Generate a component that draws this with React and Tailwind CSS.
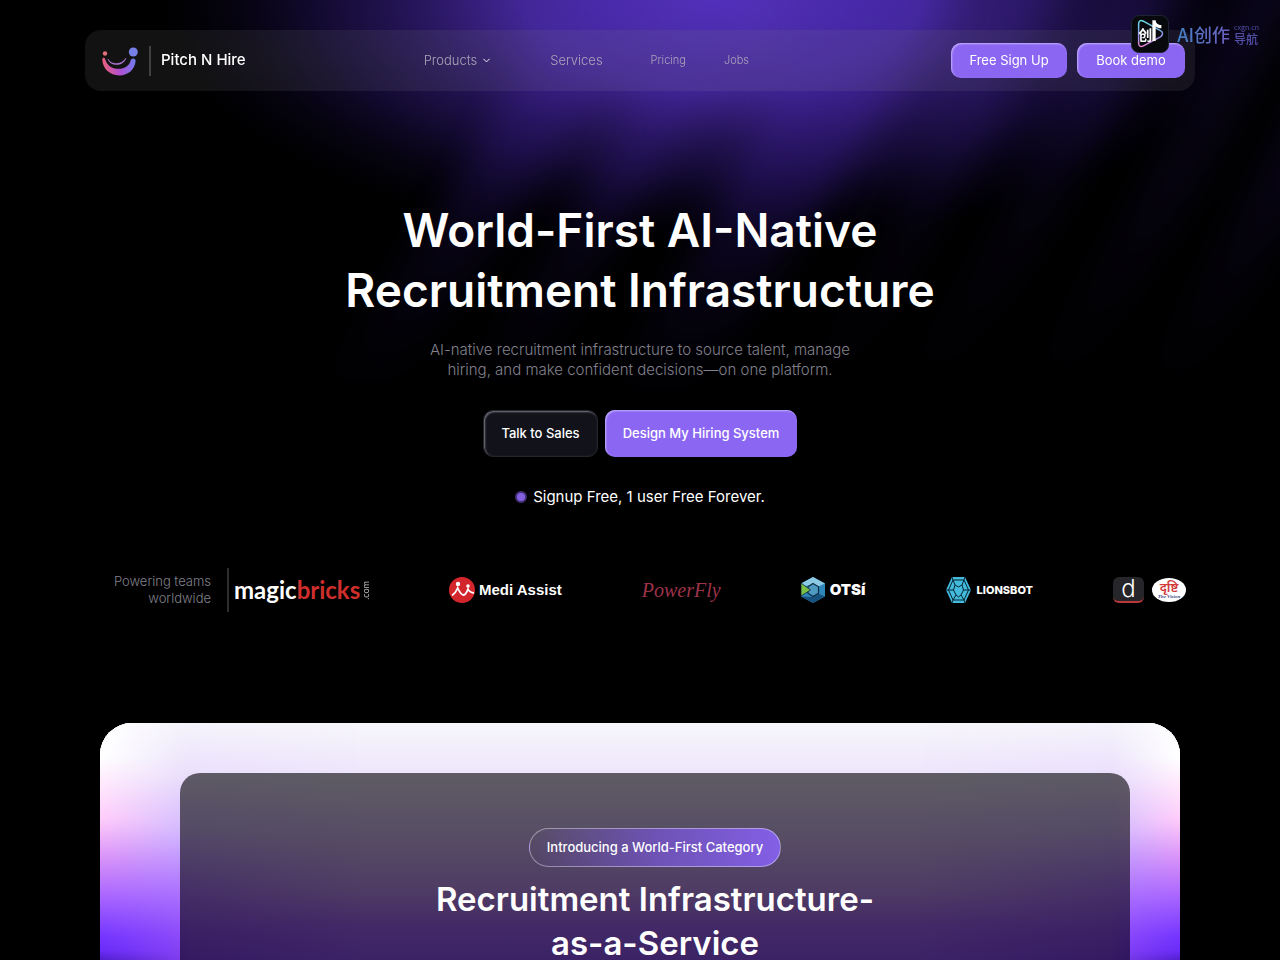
import { ChevronDown } from "lucide-react";

const HeroGlow = () => (
  <svg
    aria-hidden="true"
    className="absolute inset-x-0 top-0 h-[440px] w-full"
    viewBox="0 0 1280 440"
    preserveAspectRatio="none"
  >
    <defs>
      <radialGradient id="glow-main" cx="0.5" cy="0.5" r="0.5">
        <stop offset="0" stopColor="#5a35c8" stopOpacity="0.95" />
        <stop offset="0.35" stopColor="#4e2db0" stopOpacity="0.85" />
        <stop offset="0.7" stopColor="#2c1870" stopOpacity="0.45" />
        <stop offset="1" stopColor="#0a0420" stopOpacity="0" />
      </radialGradient>
      <linearGradient id="ray" gradientUnits="userSpaceOnUse" x1="0" y1="0" x2="0" y2="400">
        <stop offset="0" stopColor="#4a2ab4" stopOpacity="0.4" />
        <stop offset="0.5" stopColor="#3a1c98" stopOpacity="0.28" />
        <stop offset="1" stopColor="#1c0c58" stopOpacity="0" />
      </linearGradient>
      <filter
        id="soft"
        filterUnits="userSpaceOnUse"
        x="-100"
        y="-150"
        width="1600"
        height="700"
        colorInterpolationFilters="sRGB"
      >
        <feGaussianBlur stdDeviation="16" />
      </filter>
    </defs>
    <ellipse cx="720" cy="0" rx="570" ry="250" fill="url(#glow-main)" />
    <g fill="url(#ray)" filter="url(#soft)">
      <path d="M590 -60h80Q540 200 380 400h-70Q460 200 590 -60z" opacity="0.7" />
      <path d="M720 -60h60Q650 200 510 400h-60Q600 200 720 -60z" opacity="0.7" />
      <path d="M840 -60h130Q840 200 680 400h-80Q740 200 840 -60z" />
      <path d="M1020 -60h60Q960 200 830 400h-40Q930 200 1020 -60z" opacity="0.4" />
      <path d="M1140 -60h60Q1080 200 930 400h-50Q1040 200 1140 -60z" opacity="0.35" />
      <path d="M1270 -60h60Q1200 200 1060 400h-50Q1150 200 1270 -60z" opacity="0.35" />
      <path d="M1370 -60h60Q1310 200 1180 400h-50Q1260 200 1370 -60z" opacity="0.45" />
    </g>
  </svg>
);

const BrandMark = () => (
  <svg className="h-[31px] w-9" viewBox="0 0 36 31" aria-hidden="true">
    <defs>
      <linearGradient id="brand" x1="0" y1="0.3" x2="1" y2="0.2">
        <stop offset="0" stopColor="#e8607a" />
        <stop offset="0.45" stopColor="#b44fd0" />
        <stop offset="1" stopColor="#6f7cf0" />
      </linearGradient>
    </defs>
    <circle cx="3" cy="8.5" r="2.2" fill="#e0707a" />
    <circle cx="31.3" cy="7" r="4.5" fill="#7680e6" />
    <path
      d="M0.300 14.500C0.300 12.300 2.600 12.300 3.200 14.200C5 20.500 10 23.800 16.500 23.800C23 23.800 27.500 20.500 28.600 15.500C29.200 12.600 33.800 12.800 33.600 16C33 24.500 26 30.400 17.500 30.400C8 30.400 0.700 24 0.300 14.500z"
      fill="url(#brand)"
    />
    <path
      d="M6 14C9 20 19.500 20.500 24 13C21.500 21.800 8 21.500 6 14z"
      fill="#b87be0"
      stroke="#b87be0"
      strokeWidth="0.4"
    />
  </svg>
);

const NavBar = () => (
  <header className="mx-auto flex h-[61px] w-full max-w-[1110px] items-center justify-between rounded-2xl bg-[#8c8c8c]/13 pr-[10px] pl-[17px] backdrop-blur-md">
    <a href="#home" className="flex items-center">
      <BrandMark />
      <span className="ml-[11px] h-[30px] w-[2px] bg-white/20" />
      <span className="ml-[10px] text-[15px] font-medium text-white">Pitch N Hire</span>
    </a>
    <nav className="mr-6 flex items-center text-[13px] font-light text-[#aaa3b8]">
      <a href="#products" className="mr-[58px] flex items-center gap-1">
        Products
        <ChevronDown className="size-[11px] text-white" strokeWidth={2} />
      </a>
      <a href="#services" className="mr-12">
        Services
      </a>
      <a href="#pricing" className="mr-[38px] text-[11px]">
        Pricing
      </a>
      <a href="#jobs" className="text-[11px]">
        Jobs
      </a>
    </nav>
    <div className="flex gap-[10px]">
      <button className="h-[35px] w-[116px] rounded-[10px] bg-[#8b66f2] text-[13px] text-white shadow-[inset_1px_1px_2px_#c4b0ff]">
        Free Sign Up
      </button>
      <button className="h-[35px] w-[108px] rounded-[10px] bg-[#8b66f2] text-[13px] text-white shadow-[inset_1px_1px_2px_#c4b0ff]">
        Book demo
      </button>
    </div>
  </header>
);

const DirectoryBadge = () => (
  <div className="absolute top-[15px] right-[21px] flex items-center gap-2 font-['Noto_Sans_CJK_SC',sans-serif]">
    <span className="relative flex size-[38px] items-center rounded-lg border border-[#1c2630] bg-[#07090d] pl-[6px]">
      <svg className="absolute inset-0 size-full" viewBox="0 0 38 38" fill="none" aria-hidden="true">
        <defs>
          <linearGradient id="badge" x1="0" y1="0" x2="0" y2="1">
            <stop offset="0" stopColor="#63dfe6" />
            <stop offset="0.6" stopColor="#8f8fe0" />
            <stop offset="1" stopColor="#e887d8" />
          </linearGradient>
        </defs>
        <path
          d="M7 8.500C7 5 9 4 12 5.500L30 15.500C33 17 33 20 30 22L12 31.500C9 33 7 32 7 28.500z"
          stroke="url(#badge)"
          strokeWidth="1.600"
        />
        <path d="M21.500 4.500h3.500c0 3 2.500 5 6 5v3.500c-2.500 0-4.500-.8-6-2v15.500h-3.500z" fill="#fff" />
      </svg>
      <span className="relative text-sm leading-none font-bold text-white">创</span>
    </span>
    <span className="bg-linear-to-r from-[#3f7fc4] to-[#6c5fc0] bg-clip-text text-lg leading-6 font-medium text-transparent">
      AI创作
    </span>
    <span className="-ml-1 flex flex-col text-[#5350a8]">
      <span className="text-[7px] leading-[10px]">cxgn.cn</span>
      <span className="text-xs leading-[14px] font-medium">导航</span>
    </span>
  </div>
);

const Hero = () => (
  <section className="mt-[109px] flex flex-col items-center text-center">
    <h1 className="text-[46px] leading-[60px] font-semibold text-white">
      World-First AI-Native
      <br />
      Recruitment Infrastructure
    </h1>
    <p className="mt-5 text-[15px] leading-5 font-light text-[#81808c]">
      AI-native recruitment infrastructure to source talent, manage
      <br />
      hiring, and make confident decisions—on one platform.
    </p>
    <div className="mt-[30px] flex gap-[7px]">
      <button className="h-[47px] w-[115px] rounded-[10px] border border-[#25252c] bg-[#11121a] text-[13px] font-medium text-white shadow-[inset_1px_1px_2px_#7d7d86]">
        Talk to Sales
      </button>
      <button className="h-[47px] w-48 rounded-[10px] bg-[#8b66f2] text-[13px] font-medium text-white shadow-[inset_1px_1px_2px_#c4b0ff]">
        Design My Hiring System
      </button>
    </div>
    <p className="mt-[30px] flex items-center gap-[6px] text-[15px] leading-5 text-white">
      <span className="size-3 rounded-full border-2 border-[#44317a] bg-[#8460df]" />
      Signup Free, 1 user Free Forever.
    </p>
  </section>
);

const MagicBricks = () => (
  <div className="flex w-[135px] items-center justify-between font-['Lato',sans-serif] text-2xl leading-8 font-bold">
    <span className="text-white">
      magic<span className="text-[#cf2f2c]">bricks</span>
    </span>
    <span className="rotate-180 text-[9px] leading-[7px] font-normal text-[#bdbdbd] [writing-mode:vertical-rl]">
      .com
    </span>
  </div>
);

const MediAssist = () => (
  <div className="flex items-center gap-1">
    <svg className="size-[26px]" viewBox="0 0 26 26" aria-hidden="true">
      <circle cx="13" cy="13" r="13" fill="#d2252c" />
      <circle cx="9" cy="7" r="2.200" fill="#fff" />
      <circle cx="19" cy="9" r="1.800" fill="#fff" />
      <path
        d="M3 18.500C6 16.500 7.500 14 8.700 11C10 14 12 17.500 14.500 18C17 17.500 18 14.500 19 12C20 14.500 22 15.500 25 16"
        fill="none"
        stroke="#fff"
        strokeWidth="1.800"
      />
    </svg>
    <span className="font-['Liberation_Sans',sans-serif] text-[15px] font-bold text-white">Medi Assist</span>
  </div>
);

const Otsi = () => (
  <div className="flex items-center gap-[5px]">
    <svg className="h-[26px] w-6" viewBox="0 0 24 26" aria-hidden="true">
      <path d="M12 0L24 6.500V19.500L12 26L0 19.500V6.500z" fill="#2f86b8" />
      <path d="M12 0L24 6.500L17 9.500L12 7L5 9L0 6.500z" fill="#8cc9e2" />
      <path d="M0 19.500L12 26L24 19.500L17 16.500L12 20z" fill="#17527f" />
      <path d="M12 6.500L17.500 9.800V16.200L12 19.500L7 16.200V9.800z" fill="#4f9ac0" stroke="#0b2b44" strokeWidth="1.200" />
      <path d="M0 6L9.500 13L0 19z" fill="#7cc043" stroke="#0b2b44" strokeWidth="0.800" />
    </svg>
    <span className="text-[15px] font-black text-white">OTSí</span>
  </div>
);

const LionsBot = () => (
  <div className="flex items-center gap-[6px]">
    <svg className="h-[26px] w-[25px]" viewBox="0 0 25 26" aria-hidden="true">
      <path d="M6 0H19L25 13L19 26H6L0 13z" fill="#43b9dc" />
      <g fill="none" stroke="#062331" strokeWidth="1">
        <path d="M7 3H18L22.500 13L18 23H7L2.500 13z" />
        <path d="M7 3L9 8L12.500 10L16 8L18 3M9 8L7.500 13L10 18L12.500 20L15 18L17.500 13L16 8M2.500 13H7.500M17.500 13H22.500M10 18L7 23M15 18L18 23" />
        <path d="M6 0L7 3M19 0L18 3M6 26L7 23M19 26L18 23M0 13H2.500M22.500 13H25" />
      </g>
    </svg>
    <span className="text-[11px] font-extrabold text-white">LIONSBOT</span>
  </div>
);

const Drishti = () => (
  <div className="flex items-center gap-2">
    <span className="flex h-[26px] w-[31px] items-center justify-center rounded-md border-b-2 border-[#b8383c] bg-[#26252a] text-2xl leading-6 font-light text-white">
      d
    </span>
    <span className="flex h-6 w-[34px] flex-col items-center justify-center rounded-[50%] bg-white font-['Noto_Sans',sans-serif]">
      <span className="text-[13px] leading-[13px] font-semibold text-[#d23a3a]">दृष्टि</span>
      <span className="font-['Liberation_Serif',serif] text-[5px] leading-[5px] font-bold text-[#3a3f80] italic">
        The Vision
      </span>
    </span>
  </div>
);

const TrustedBy = () => (
  <section className="mx-auto mt-[61px] flex w-full max-w-[1080px] items-center">
    <p className="w-[111px] shrink-0 text-right text-[13px] leading-[17px] font-light text-[#81808c]">
      Powering teams worldwide
    </p>
    <div className="ml-4 flex h-11 min-w-0 flex-1 items-center border-l-2 border-[#2d2d30] pl-[5px]">
      <div className="flex items-center gap-20 whitespace-nowrap">
        <MagicBricks />
        <MediAssist />
        <span className="font-['Liberation_Serif',serif] text-xl text-[#9d3349] italic">PowerFly</span>
        <Otsi />
        <LionsBot />
        <Drishti />
      </div>
    </div>
  </section>
);

const CategoryCard = () => (
  <section className="relative mx-auto mt-[111px] w-full max-w-[1080px] flex-1 overflow-hidden rounded-t-[32px] bg-[#f7f6fb] pt-[50px] pr-[50px] pl-20">
    {/* colour wash: middle column first, then the two brighter edges */}
    <div className="absolute inset-0 bg-[linear-gradient(180deg,#f7f6fb_0%,#eee6fc_21%,#d9c3fa_45%,#c596fa_69%,#a766ff_84%,#9355ff_100%)]" />
    <div className="absolute inset-y-0 left-0 w-[260px] bg-[linear-gradient(180deg,#f5f3fb_0%,#e9defc_22%,#cfb8ff_45%,#ae78ff_68%,#9350fa_86%,#803ef0_100%)] [mask-image:linear-gradient(90deg,black_30%,transparent)]" />
    <div className="absolute inset-y-0 right-0 w-[260px] bg-[linear-gradient(180deg,#f5f3fb_0%,#e9defc_22%,#cfb8ff_45%,#ae78ff_68%,#9350fa_86%,#803ef0_100%)] [mask-image:linear-gradient(270deg,black_20%,transparent)]" />
    <div className="absolute inset-y-0 left-0 w-[90px] bg-[linear-gradient(180deg,#fff_14%,#ffe3fc_28%,#ffcbfa_40%,#d892f8_56%,#a864ff_72%,#7436ff_88%,#6a2cf8_94%,#4517b8_100%)] [mask-image:linear-gradient(90deg,black,transparent)]" />
    <div className="absolute inset-y-0 right-0 w-[70px] bg-[linear-gradient(180deg,#fff_14%,#ffe3fc_28%,#ffcbfa_40%,#d892f8_56%,#a864ff_72%,#7436ff_88%,#6a2cf8_94%,#4517b8_100%)] [mask-image:linear-gradient(270deg,black,transparent)]" />
    <div className="relative flex h-full flex-col items-center rounded-t-[20px] bg-black/60 pt-[55px] text-center">
      <span className="rounded-full border border-white/40 bg-linear-to-r from-transparent via-[#6e52b4] to-[#835fe6] px-[17px] py-[9px] text-[13px] leading-[19px] font-medium text-white">
        Introducing a World-First Category
      </span>
      <h2 className="mt-[10px] text-[33px] leading-11 font-semibold text-white">
        Recruitment Infrastructure-
        <br />
        as-a-Service
      </h2>
    </div>
  </section>
);

const App = () => {
  return (
    <div className="relative flex min-h-screen flex-col overflow-hidden bg-black pt-[30px] font-['Inter',sans-serif]">
      <HeroGlow />
      <div className="relative flex flex-1 flex-col px-4">
        <NavBar />
        <Hero />
        <TrustedBy />
        <CategoryCard />
      </div>
      <DirectoryBadge />
    </div>
  );
};

export default App;
